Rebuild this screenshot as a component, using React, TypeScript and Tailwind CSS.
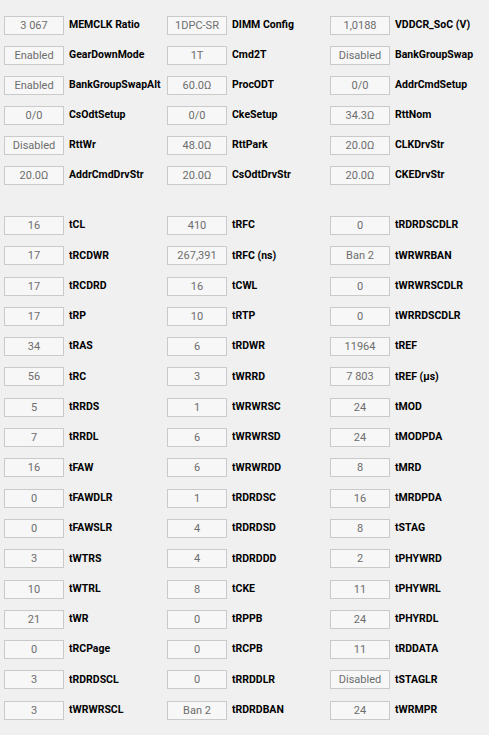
const top: [string, string][][] = [
  [["3 067", "MEMCLK Ratio"], ["1DPC-SR", "DIMM Config"], ["1,0188", "VDDCR_SoC (V)"]],
  [["Enabled", "GearDownMode"], ["1T", "Cmd2T"], ["Disabled", "BankGroupSwap"]],
  [["Enabled", "BankGroupSwapAlt"], ["60.0Ω", "ProcODT"], ["0/0", "AddrCmdSetup"]],
  [["0/0", "CsOdtSetup"], ["0/0", "CkeSetup"], ["34.3Ω", "RttNom"]],
  [["Disabled", "RttWr"], ["48.0Ω", "RttPark"], ["20.0Ω", "CLKDrvStr"]],
  [["20.0Ω", "AddrCmdDrvStr"], ["20.0Ω", "CsOdtDrvStr"], ["20.0Ω", "CKEDrvStr"]],
];

const timings: [string, string][][] = [
  [["16", "tCL"], ["410", "tRFC"], ["0", "tRDRDSCDLR"]],
  [["17", "tRCDWR"], ["267,391", "tRFC (ns)"], ["Ban 2", "tWRWRBAN"]],
  [["17", "tRCDRD"], ["16", "tCWL"], ["0", "tWRWRSCDLR"]],
  [["17", "tRP"], ["10", "tRTP"], ["0", "tWRRDSCDLR"]],
  [["34", "tRAS"], ["6", "tRDWR"], ["11964", "tREF"]],
  [["56", "tRC"], ["3", "tWRRD"], ["7 803", "tREF (µs)"]],
  [["5", "tRRDS"], ["1", "tWRWRSC"], ["24", "tMOD"]],
  [["7", "tRRDL"], ["6", "tWRWRSD"], ["24", "tMODPDA"]],
  [["16", "tFAW"], ["6", "tWRWRDD"], ["8", "tMRD"]],
  [["0", "tFAWDLR"], ["1", "tRDRDSC"], ["16", "tMRDPDA"]],
  [["0", "tFAWSLR"], ["4", "tRDRDSD"], ["8", "tSTAG"]],
  [["3", "tWTRS"], ["4", "tRDRDDD"], ["2", "tPHYWRD"]],
  [["10", "tWTRL"], ["8", "tCKE"], ["11", "tPHYWRL"]],
  [["21", "tWR"], ["0", "tRPPB"], ["24", "tPHYRDL"]],
  [["0", "tRCPage"], ["0", "tRCPB"], ["11", "tRDDATA"]],
  [["3", "tRDRDSCL"], ["0", "tRRDDLR"], ["Disabled", "tSTAGLR"]],
  [["3", "tWRWRSCL"], ["Ban 2", "tRDRDBAN"], ["24", "tWRMPR"]],
];

function Field({ value, label }: { value: string; label: string }) {
  return (
    <div className="flex items-center gap-[5px]">
      <div className="w-[60px] h-[19px] shrink-0 bg-[#f7f7f7] border border-[#cacaca] flex items-center justify-center text-[11px] text-[#6d6d6d] leading-none">
        {value}
      </div>
      <span className="text-[10.5px] font-bold text-black whitespace-nowrap leading-none">{label}</span>
    </div>
  );
}

function Section({ rows, gap }: { rows: [string, string][][]; gap: string }) {
  return (
    <div className={`grid grid-cols-[163px_163px_163px] ${gap}`}>
      {rows.flat().map(([v, l]) => (
        <Field key={l} value={v} label={l} />
      ))}
    </div>
  );
}

export default function App() {
  return (
    <div className="w-[489px] h-[735px] bg-[#f0f0f0] pl-[4px] pt-[16px] overflow-hidden" style={{ fontFamily: "Roboto, 'Liberation Sans', sans-serif" }}>
      <Section rows={top} gap="gap-y-[11px]" />
      <div className="h-[31px]" />
      <Section rows={timings} gap="gap-y-[11.3px]" />
    </div>
  );
}
